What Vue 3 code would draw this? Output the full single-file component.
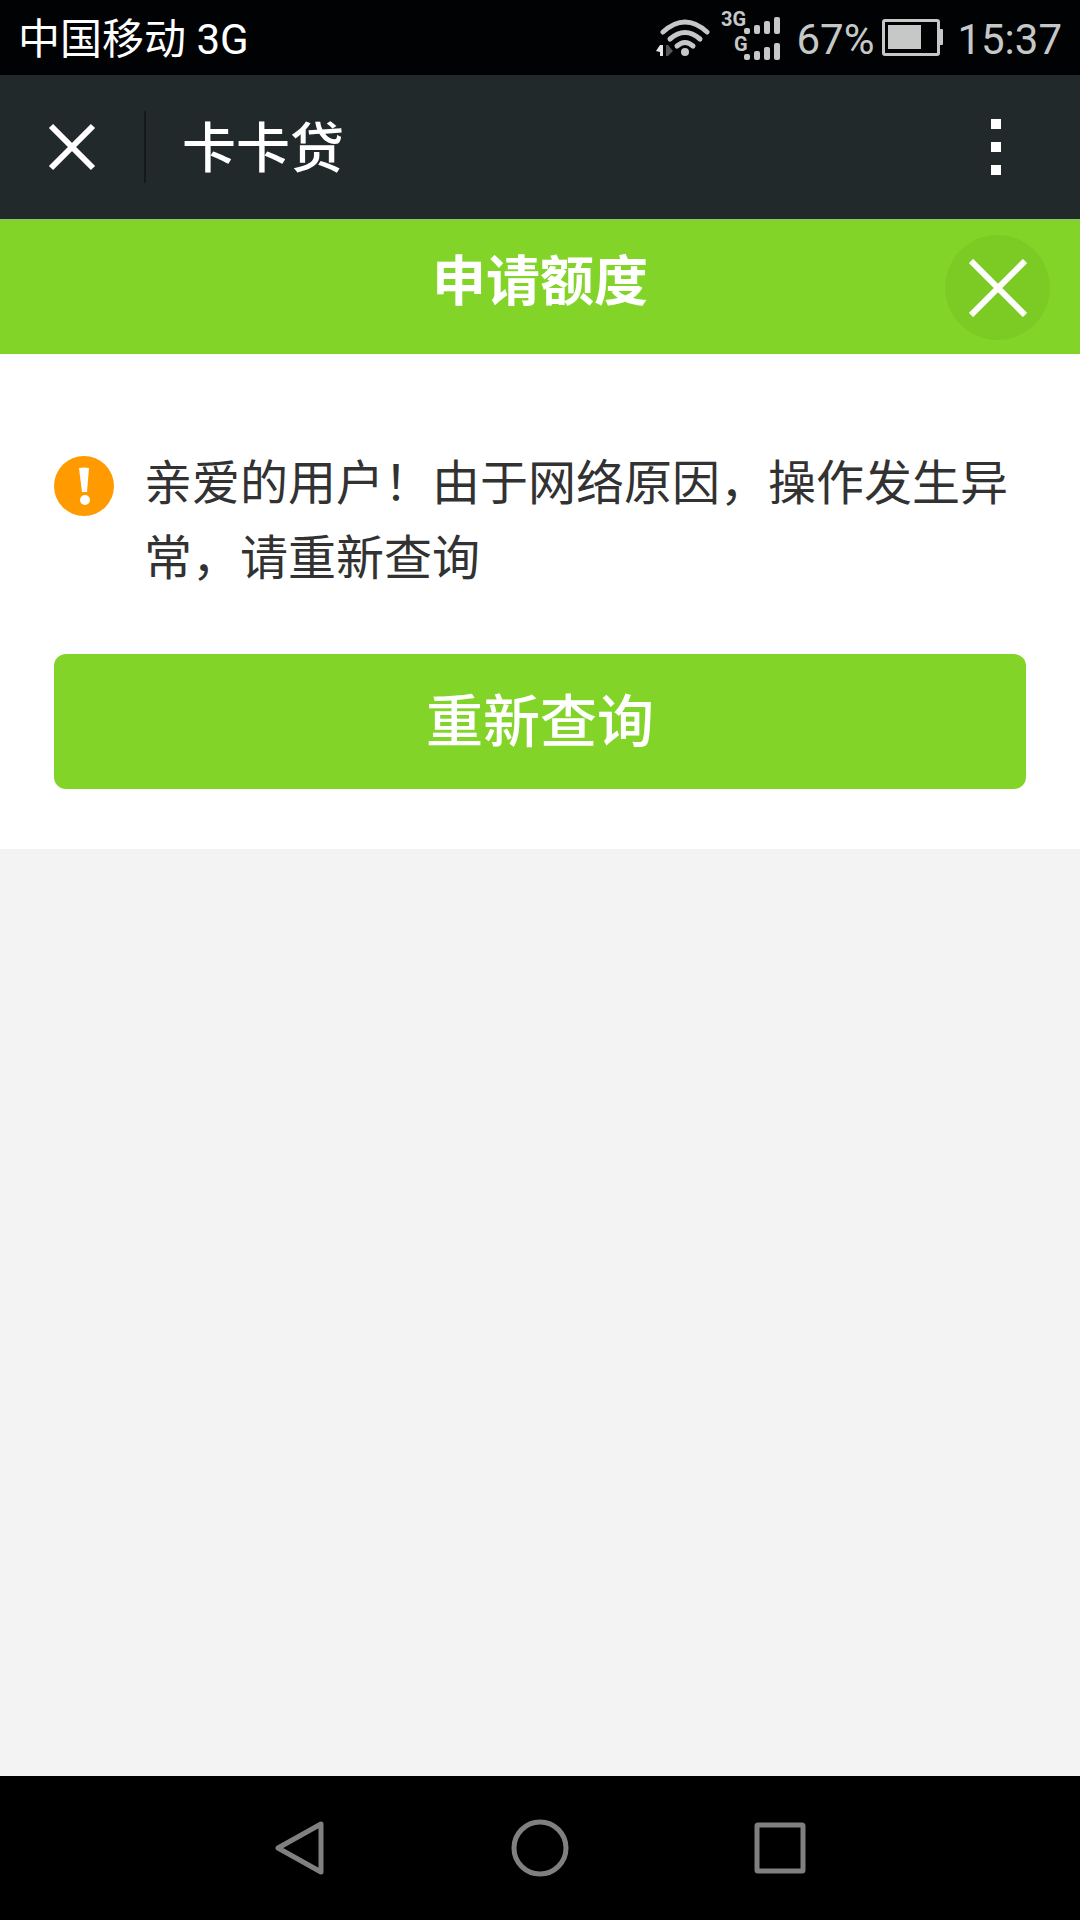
<script setup>
const carrier = '中国移动 3G'
const battery = '67%'
const time = '15:37'
</script>

<template>
  <div class="screen">
    <header class="status">
      <span class="carrier">{{ carrier }}</span>
      <div class="indicators">
        <svg class="wifi" width="56" height="44" viewBox="0 0 56 44" fill="none" stroke="#c6c8c8" stroke-width="5" stroke-linecap="round" aria-hidden="true">
          <path d="M9 16Q31 -4 53 16" />
          <path d="M16 23Q31 10 46 23" />
          <path d="M23 30Q31 23 39 30" />
          <circle cx="31" cy="36" r="4" fill="#c6c8c8" stroke="none" />
          <path d="M2 35L6 29H9V40H6V36Z" fill="#e4e6e6" stroke="none" />
          <path d="M12 29H14L19 35L14 40H12Z" fill="#555" stroke="none" />
        </svg>
        <svg class="signal" width="62" height="61" viewBox="0 0 62 61" fill="#c6c8c8" aria-hidden="true">
          <text x="1" y="19" class="net">3G</text>
          <text x="14" y="44" class="net">G</text>
          <rect x="24" y="21" width="6" height="6" rx="2" />
          <rect x="34" y="18" width="6" height="9" rx="2" />
          <rect x="44" y="14" width="6" height="13" rx="2" />
          <rect x="54" y="10" width="6" height="17" rx="2" />
          <rect x="24" y="47" width="6" height="6" rx="2" />
          <rect x="34" y="44" width="6" height="9" rx="2" />
          <rect x="44" y="40" width="6" height="13" rx="2" />
          <rect x="54" y="36" width="6" height="17" rx="2" />
        </svg>
        <span class="percent">{{ battery }}</span>
        <svg class="battery" width="61" height="37" viewBox="0 0 61 37" aria-hidden="true">
          <path d="M3 0H55Q58 0 58 3V34Q58 37 55 37H3Q0 37 0 34V3Q0 0 3 0ZM3 3V34H55V3Z" fill="#c6c8c8" fill-rule="evenodd" />
          <rect x="6" y="6" width="33" height="24" fill="#c6c8c8" />
          <rect x="57" y="10" width="4" height="16" rx="1" fill="#c6c8c8" />
        </svg>
        <span class="time">{{ time }}</span>
      </div>
    </header>

    <nav class="appbar">
      <button class="close" type="button" aria-label="关闭">
        <svg width="48" height="48" viewBox="0 0 48 48" stroke="#fff" stroke-width="6" aria-hidden="true">
          <path d="M3 3L45 45M45 3L3 45" />
        </svg>
      </button>
      <span class="app-name">卡卡贷</span>
      <button class="more" type="button" aria-label="更多">
        <svg width="10" height="56" viewBox="0 0 10 56" fill="#fff" aria-hidden="true">
          <path d="M0 0H10V10H0ZM0 23H10V33H0ZM0 46H10V56H0Z" />
        </svg>
      </button>
    </nav>

    <main class="content">
      <div class="titlebar">
        <h1>申请额度</h1>
        <button class="dismiss" type="button" aria-label="关闭页面">
          <svg width="58" height="58" viewBox="0 0 58 58" stroke="#fff" stroke-width="6" aria-hidden="true">
            <path d="M2 2L56 56M56 2L2 56" />
          </svg>
        </button>
      </div>
      <section class="panel">
        <div class="notice">
          <svg class="warn" width="60" height="60" viewBox="0 0 60 60" aria-hidden="true">
            <circle cx="30" cy="30" r="30" fill="#ff9b00" />
            <path d="M25 12Q30 11 35 12L33 36H28Z" fill="#fff" />
            <circle cx="31" cy="44" r="5" fill="#fff" />
          </svg>
          <p>亲爱的用户！由于网络原因，操作发生异常，请重新查询</p>
        </div>
        <button class="retry" type="button">重新查询</button>
      </section>
    </main>

    <footer class="softkeys">
      <button type="button" aria-label="返回">
        <svg width="60" height="60" viewBox="0 0 60 60"><path d="M51 6V54L8 30Z" /></svg>
      </button>
      <button type="button" aria-label="主页">
        <svg width="60" height="60" viewBox="0 0 60 60"><circle cx="30" cy="30" r="26" /></svg>
      </button>
      <button type="button" aria-label="最近任务">
        <svg width="60" height="60" viewBox="0 0 60 60"><rect x="7" y="7" width="46" height="46" rx="1" /></svg>
      </button>
    </footer>
  </div>
</template>

<style>
body {
  margin: 0;
}
</style>

<style scoped>
.screen {
  display: flex;
  flex-direction: column;
  min-height: 100vh;
  background: #f3f3f3;
  font-family: Roboto, "Noto Sans CJK SC", sans-serif;
}
button {
  margin: 0;
  padding: 0;
  border: 0;
  background: none;
  font-family: inherit;
  display: flex;
  align-items: center;
  justify-content: center;
}
svg {
  display: block;
  flex: none;
}
.status {
  display: flex;
  align-items: center;
  justify-content: space-between;
  height: 75px;
  padding: 0 18px;
  box-sizing: border-box;
  background: #000204;
  color: #fff;
  font-size: 42px;
  line-height: 72px;
}
.carrier,
.percent,
.time {
  padding-top: 4px;
}
.indicators {
  display: flex;
  align-items: center;
  color: #c6c8c8;
}
.signal {
  margin: 0 14px 0 10px;
}
.net {
  font: bold 20px Roboto, sans-serif;
}
.battery {
  margin: 0 14px 0 8px;
}
.appbar {
  display: flex;
  align-items: center;
  height: 144px;
  background: #22292b;
  color: #fff;
}
.close {
  width: 146px;
  height: 72px;
  border-right: 2px solid #14191a;
}
.app-name {
  flex: 1;
  padding: 6px 0 0 36px;
  font-size: 54px;
  font-weight: 500;
  line-height: 72px;
}
.more {
  width: 168px;
  height: 96px;
}
.content {
  flex: 1;
}
.titlebar {
  display: grid;
  grid-template-columns: 1fr auto 1fr;
  align-items: center;
  height: 135px;
  padding: 0 30px;
  box-sizing: border-box;
  background: #83d428;
  border-top: 2px solid #8bc850;
  color: #fff;
}
h1 {
  grid-column: 2;
  margin: 0;
  padding-bottom: 9px;
  font-size: 54px;
  font-weight: 700;
  line-height: 72px;
}
.dismiss {
  justify-self: end;
  width: 105px;
  height: 105px;
  border-radius: 50%;
  background: #7ccb25;
}
.panel {
  padding: 92px 54px 60px;
  background: #fff;
}
.notice {
  display: flex;
  gap: 30px;
  margin-bottom: 58px;
}
.warn {
  margin-top: 10px;
}
.notice p {
  margin: 0;
  color: #323232;
  font-size: 48px;
  line-height: 75px;
}
.retry {
  width: 100%;
  height: 135px;
  padding-bottom: 9px;
  border-radius: 12px;
  background: #83d428;
  color: #fff;
  font-size: 57px;
  font-weight: 500;
}
.softkeys {
  display: flex;
  align-items: center;
  justify-content: center;
  gap: 180px;
  height: 144px;
  background: #000;
}
.softkeys svg {
  fill: none;
  stroke: #808080;
  stroke-width: 5;
  stroke-linejoin: round;
}
</style>
